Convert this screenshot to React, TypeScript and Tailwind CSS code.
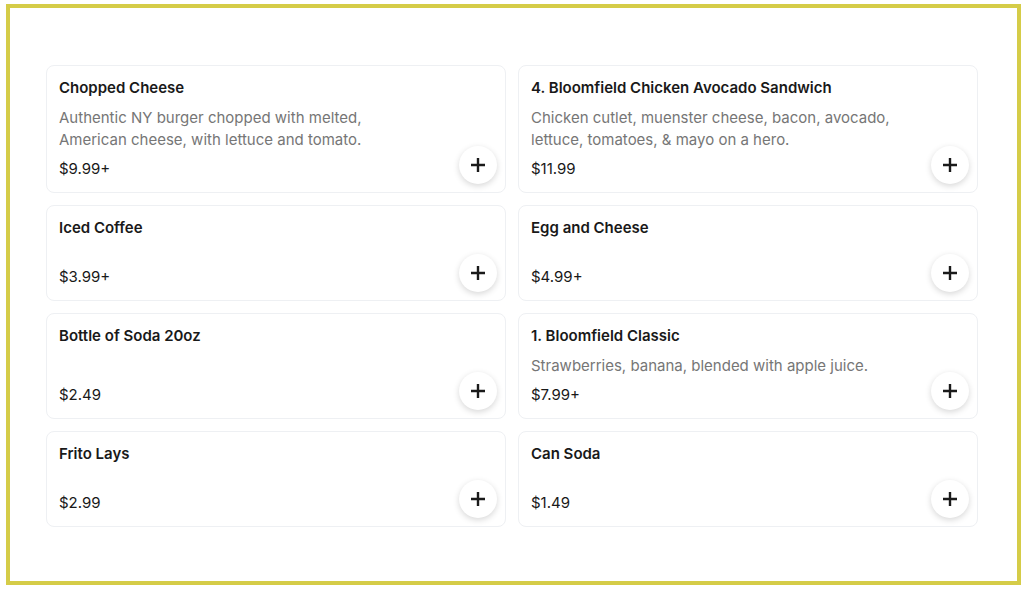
import React from "react";

type Item = {
  name: string;
  description?: string;
  price: string;
};

const items: Item[] = [
  {
    name: "Chopped Cheese",
    description:
      "Authentic NY burger chopped with melted, American cheese, with lettuce and tomato.",
    price: "$9.99+",
  },
  {
    name: "4. Bloomfield Chicken Avocado Sandwich",
    description:
      "Chicken cutlet, muenster cheese, bacon, avocado, lettuce, tomatoes, & mayo on a hero.",
    price: "$11.99",
  },
  { name: "Iced Coffee", price: "$3.99+" },
  { name: "Egg and Cheese", price: "$4.99+" },
  { name: "Bottle of Soda 20oz", price: "$2.49" },
  {
    name: "1. Bloomfield Classic",
    description: "Strawberries, banana, blended with apple juice.",
    price: "$7.99+",
  },
  { name: "Frito Lays", price: "$2.99" },
  { name: "Can Soda", price: "$1.49" },
];

function PlusIcon() {
  return (
    <svg width="16" height="16" viewBox="0 0 16 16" fill="none">
      <path
        d="M8 1v14M1 8h14"
        stroke="#1a1a1a"
        strokeWidth="2.4"
        strokeLinecap="butt"
      />
    </svg>
  );
}

function MenuCard({ item }: { item: Item }) {
  return (
    <div className="relative flex min-h-[96px] flex-col rounded-lg border border-[#eef0f3] bg-white px-3 pt-3 pb-[13px]">
      <h3 className="text-[15px] leading-5 font-semibold text-[#191919]">
        {item.name}
      </h3>
      {item.description && (
        <p className="mt-[9px] max-w-[366px] text-[15px] leading-[22px] text-[#767676]">
          {item.description}
        </p>
      )}
      <p className="mt-auto pt-2 text-[15px] leading-5 text-[#191919]">
        {item.price}
      </p>
      <button className="absolute right-2 bottom-2 flex h-[38px] w-[38px] items-center justify-center rounded-full bg-white shadow-[0_2px_6px_rgba(0,0,0,0.16)]">
        <PlusIcon />
      </button>
    </div>
  );
}

export default function App() {
  return (
    <div
      className="bg-white pt-1 pb-1 pl-1.5 pr-[5px]"
      style={{ fontFamily: "Inter, 'Noto Sans', sans-serif" }}
    >
      <div className="h-[581px] border-4 border-[#d5cc48] pt-[57px] pl-[36px]">
        <div className="grid w-[932px] grid-cols-2 gap-3">
          {items.map((item) => (
            <MenuCard key={item.name} item={item} />
          ))}
        </div>
      </div>
    </div>
  );
}
